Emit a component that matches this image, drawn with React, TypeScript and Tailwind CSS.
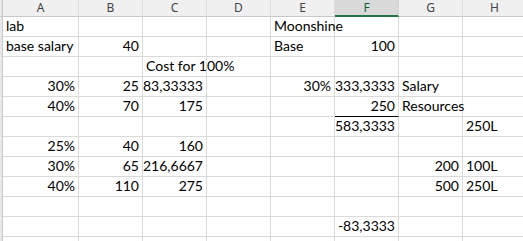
import React from "react";

type Cell = { v: string; align?: "left" | "right"; bottom?: boolean };

const cols = ["A", "B", "C", "D", "E", "F", "G", "H"];

// rows of cells keyed by column letter
const rows: Record<string, Cell>[] = [
  { A: { v: "lab" }, E: { v: "Moonshine" } },
  { A: { v: "base salary" }, B: { v: "40", align: "right" }, E: { v: "Base" }, F: { v: "100", align: "right" } },
  { C: { v: "Cost for 100%" } },
  {
    A: { v: "30%", align: "right" },
    B: { v: "25", align: "right" },
    C: { v: "83,33333", align: "right" },
    E: { v: "30%", align: "right" },
    F: { v: "333,3333", align: "right" },
    G: { v: "Salary" },
  },
  {
    A: { v: "40%", align: "right" },
    B: { v: "70", align: "right" },
    C: { v: "175", align: "right" },
    F: { v: "250", align: "right", bottom: true },
    G: { v: "Resources" },
  },
  { F: { v: "583,3333", align: "right" }, H: { v: "250L" } },
  { A: { v: "25%", align: "right" }, B: { v: "40", align: "right" }, C: { v: "160", align: "right" } },
  {
    A: { v: "30%", align: "right" },
    B: { v: "65", align: "right" },
    C: { v: "216,6667", align: "right" },
    G: { v: "200", align: "right" },
    H: { v: "100L" },
  },
  {
    A: { v: "40%", align: "right" },
    B: { v: "110", align: "right" },
    C: { v: "275", align: "right" },
    G: { v: "500", align: "right" },
    H: { v: "250L" },
  },
  {},
  { F: { v: "-83,3333", align: "right" } },
  {},
];

export default function App() {
  return (
    <div className="h-[241px] w-[523px] overflow-hidden bg-white text-black">
      <div className="grid w-max grid-cols-[3px_76px_64px_64px_64px_64px_64px_64px_64px]">
        <div className="h-[17px] border-b border-r border-[#c8c8c8] bg-[#e8e8e8]" />
        {cols.map((c) => (
          <div
            key={c}
            className={
              c === "F"
                ? "flex h-[17px] items-center justify-center border-b-2 border-r border-b-[#217346] border-r-[#d0d0d0] bg-[#d9d9d9] font-['Noto_Sans',sans-serif] text-[12px] leading-[14px] text-[#185c37]"
                : "flex h-[17px] items-center justify-center border-b border-r border-b-[#c8c8c8] border-r-[#dcdcdc] bg-[#f0f0f0] font-['Noto_Sans',sans-serif] text-[12px] leading-[14px] text-[#444]"
            }
          >
            {c}
          </div>
        ))}
        {rows.map((row, i) => (
          <React.Fragment key={i}>
            <div className="h-[20px] border-r border-[#c8c8c8] bg-[#e8e8e8]" />
            {cols.map((c) => {
              const cell = row[c];
              return (
                <div
                  key={c}
                  className={`relative h-[20px] border-b border-r border-r-[#dadada] ${cell?.bottom ? "border-b-black" : "border-b-[#dadada]"}`}
                >
                  {cell ? (
                    <span
                      className={`absolute bottom-[1px] whitespace-nowrap font-['Lato',sans-serif] text-[14px] leading-[18px] ${
                        cell.align === "right" ? "right-[3px]" : "left-[3px]"
                      }`}
                    >
                      {cell.v}
                    </span>
                  ) : null}
                </div>
              );
            })}
          </React.Fragment>
        ))}
      </div>
    </div>
  );
}
